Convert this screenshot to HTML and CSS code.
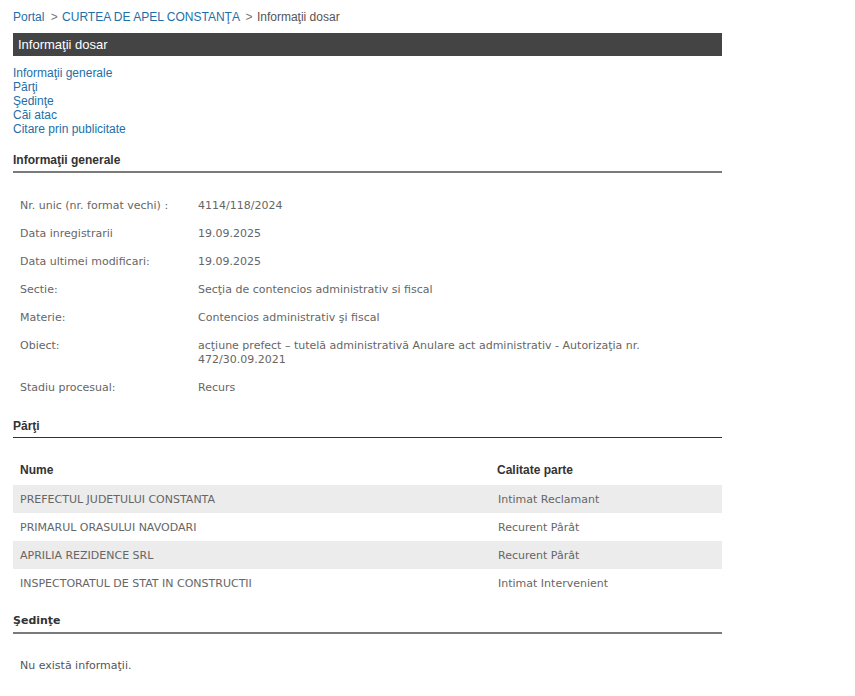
FILE: index.html
```
<!DOCTYPE html>
<html>
<head>
  <title>Informaţii dosar</title>
  <meta charset="utf-8">
  <link rel="stylesheet" href="styles.css">
</head>
<body>
  <div class="page">
    <div class="crumbs">
      <a href="#">Portal</a> <span class="sep">&gt;</span> <a href="#">CURTEA DE APEL CONSTANŢA</a> <span class="sep">&gt;</span> Informaţii dosar
    </div>

    <div class="titlebar">Informaţii dosar</div>

    <div class="toc">
      <a href="#generale">Informaţii generale</a>
      <a href="#parti">Părţi</a>
      <a href="#sedinte">Şedinţe</a>
      <a href="#cai">Căi atac</a>
      <a href="#citare">Citare prin publicitate</a>
    </div>

    <h2 class="section gray" id="generale">Informaţii generale</h2>
    <table class="info">
      <tr><td class="lbl">Nr. unic (nr. format vechi) :</td><td>4114/118/2024</td></tr>
      <tr><td class="lbl">Data inregistrarii</td><td>19.09.2025</td></tr>
      <tr><td class="lbl">Data ultimei modificari:</td><td>19.09.2025</td></tr>
      <tr><td class="lbl">Sectie:</td><td>Secţia de contencios administrativ si fiscal</td></tr>
      <tr><td class="lbl">Materie:</td><td>Contencios administrativ şi fiscal</td></tr>
      <tr><td class="lbl">Obiect:</td><td>acţiune prefect – tutelă administrativă Anulare act administrativ - Autorizaţia nr. 472/30.09.2021</td></tr>
      <tr><td class="lbl">Stadiu procesual:</td><td>Recurs</td></tr>
    </table>

    <h2 class="section" id="parti">Părţi</h2>
    <table class="parti">
      <tr><th>Nume</th><th class="col2">Calitate parte</th></tr>
      <tr class="odd"><td>PREFECTUL JUDETULUI CONSTANTA</td><td>Intimat Reclamant</td></tr>
      <tr><td>PRIMARUL ORASULUI NAVODARI</td><td>Recurent Pârât</td></tr>
      <tr class="odd"><td>APRILIA REZIDENCE SRL</td><td>Recurent Pârât</td></tr>
      <tr><td>INSPECTORATUL DE STAT IN CONSTRUCTII</td><td>Intimat Intervenient</td></tr>
    </table>

    <h2 class="section gray tahoma" id="sedinte">Şedinţe</h2>
    <p class="empty">Nu există informaţii.</p>
  </div>
</body>
</html>
```

FILE: styles.css
```
body { margin: 0; background: #fff; font-family: "Liberation Sans", Arial, sans-serif; font-size: 12px; color: #333; }
.page { width: 709px; padding: 10px 0 0 13px; }
a { color: #1d6fa8; text-decoration: none; }

.crumbs { font-size: 12px; color: #555; line-height: 14px; }
.crumbs .sep { color: #777; margin: 0 1px 0 3px; }

.titlebar {
  margin-top: 9px;
  height: 23px;
  line-height: 23px;
  background: #444;
  color: #fff;
  font-size: 13px;
  padding-left: 5px;
}

.toc { margin-top: 10px; line-height: 14px; }
.toc a { display: block; }

.section {
  margin: 17px 0 0;
  font-size: 12px;
  font-weight: bold;
  color: #333;
  line-height: 14px;
  padding-bottom: 4px;
  border-bottom: 1px solid #333;
}
.section.gray { border-bottom: 2px solid #7a7a7a; }
.tahoma { font-family: "DejaVu Sans", sans-serif; font-size: 11px; margin-top: 17px; }

.info, .parti { border-collapse: collapse; width: 100%; font-family: "DejaVu Sans", sans-serif; font-size: 11px; color: #666; }
.info { margin-top: 19px; }
.info td { padding: 7px 20px 7px 7px; vertical-align: top; line-height: 14px; }
.info td.lbl { width: 151px; }

.parti { margin-top: 21px; }
.parti th { text-align: left; font-family: "Liberation Sans", Arial, sans-serif; font-size: 12px; color: #333; padding: 4px 7px 8px; }
.parti th.col2 { width: 218px; padding-left: 6px; }
.parti td { height: 28px; padding: 0 7px; }
.parti tr.odd td { background: #ececec; }

.empty { margin: 25px 0 0 7px; font-family: "DejaVu Sans", sans-serif; font-size: 11px; color: #555; }
```
